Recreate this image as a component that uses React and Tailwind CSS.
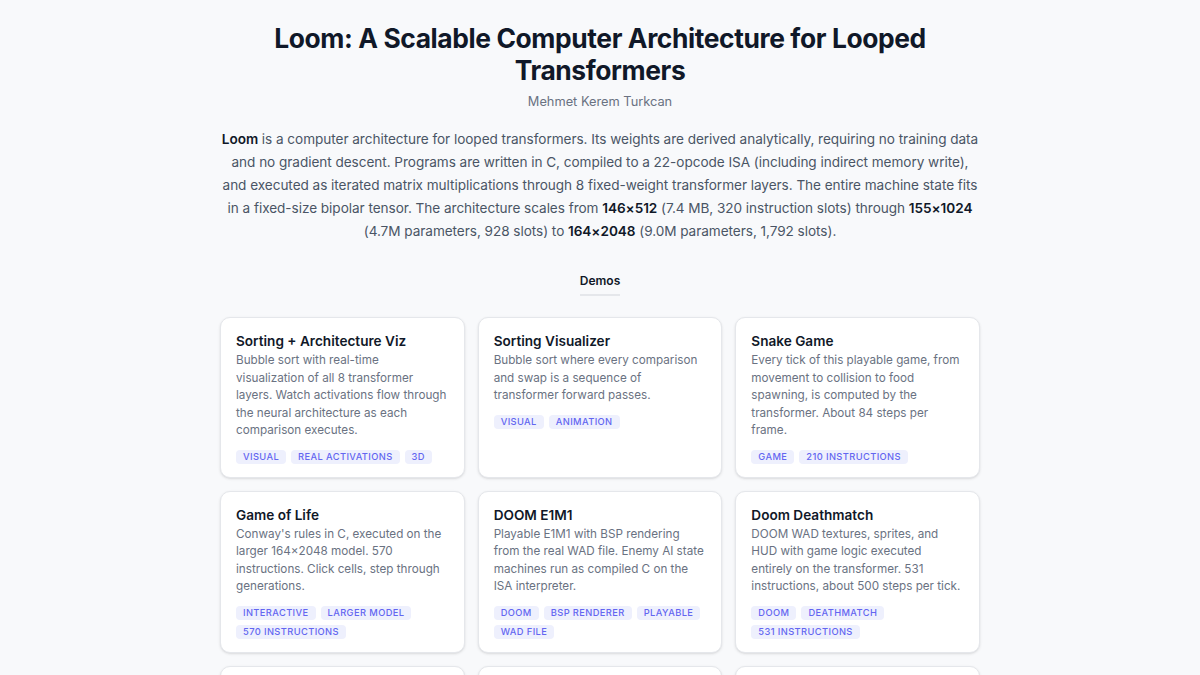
import React from "react";

const demos = [
  {
    title: "Sorting + Architecture Viz",
    desc: "Bubble sort with real-time visualization of all 8 transformer layers. Watch activations flow through the neural architecture as each comparison executes.",
    tags: ["Visual", "Real activations", "3D"],
  },
  {
    title: "Sorting Visualizer",
    desc: "Bubble sort where every comparison and swap is a sequence of transformer forward passes.",
    tags: ["Visual", "Animation"],
  },
  {
    title: "Snake Game",
    desc: "Every tick of this playable game, from movement to collision to food spawning, is computed by the transformer. About 84 steps per frame.",
    tags: ["Game", "210 instructions"],
  },
  {
    title: "Game of Life",
    desc: "Conway's rules in C, executed on the larger 164×2048 model. 570 instructions. Click cells, step through generations.",
    tags: ["Interactive", "Larger model", "570 instructions"],
  },
  {
    title: "DOOM E1M1",
    desc: "Playable E1M1 with BSP rendering from the real WAD file. Enemy AI state machines run as compiled C on the ISA interpreter.",
    tags: ["DOOM", "BSP renderer", "Playable", "WAD file"],
  },
  {
    title: "Doom Deathmatch",
    desc: "DOOM WAD textures, sprites, and HUD with game logic executed entirely on the transformer. 531 instructions, about 500 steps per tick.",
    tags: ["DOOM", "Deathmatch", "531 instructions"],
  },
  { title: "Assembler", desc: "", tags: [] },
  { title: "Calculator", desc: "", tags: [] },
  { title: "Memory", desc: "", tags: [] },
];

const Card = ({ demo }) => {
  return (
    <div className="bg-white border border-gray-200 rounded-[10px] shadow-sm px-[15px] pt-[13px] pb-[13px] flex flex-col">
      <h3 className="text-[13.6px] leading-[20px] font-semibold text-gray-900">{demo.title}</h3>
      <p className="mt-px text-[11.7px] leading-[17.5px] text-gray-500">{demo.desc}</p>
      <div className="mt-[10px] flex flex-wrap gap-x-[5px] gap-y-[5px]">
        {demo.tags.map((t) => (
          <span
            key={t}
            className="bg-[#eef0fd] text-[#6366f1] text-[9.3px] leading-[14px] font-medium uppercase tracking-[0.4px] rounded px-[7px]"
          >
            {t}
          </span>
        ))}
      </div>
    </div>
  );
};

const App = () => {
  return (
    <div className="min-h-screen bg-[#f8f9fb] font-['Inter',sans-serif]">
      <div className="w-[760px] mx-auto pt-[22px] pb-10 text-center">
        <h1 className="text-[26.4px] leading-[32px] font-bold text-gray-900 tracking-[-0.4px] px-10">
          Loom: A Scalable Computer Architecture for Looped Transformers
        </h1>
        <p className="mt-[6px] text-[12.8px] leading-[20px] text-gray-500">Mehmet Kerem Turkcan</p>
        <p className="mt-[16px] text-[13.6px] leading-[23px] tracking-[-0.05px] text-gray-600">
          <b className="font-semibold text-gray-900">Loom</b> is a computer architecture for looped transformers. Its
          weights are derived analytically, requiring no training data and no gradient descent. Programs are written
          in C, compiled to a 22-opcode ISA (including indirect memory write), and executed as iterated matrix
          multiplications through 8 fixed-weight transformer layers. The entire machine state fits in a fixed-size
          bipolar tensor. The architecture scales from <b className="font-semibold text-gray-900">146×512</b> (7.4 MB,
          320 instruction slots) through <b className="font-semibold text-gray-900">155×1024</b> (4.7M parameters, 928
          slots) to <b className="font-semibold text-gray-900">164×2048</b> (9.0M parameters, 1,792 slots).
        </p>
        <div className="mt-[28px] flex justify-center">
          <h2 className="text-[12px] leading-[20px] font-semibold text-gray-900 pb-[3px] border-b-2 border-gray-200">
            Demos
          </h2>
        </div>
        <div className="mt-[21px] grid grid-cols-3 gap-[13px] text-left">
          {demos.map((d) => (
            <Card key={d.title} demo={d} />
          ))}
        </div>
      </div>
    </div>
  );
};

export default App;
